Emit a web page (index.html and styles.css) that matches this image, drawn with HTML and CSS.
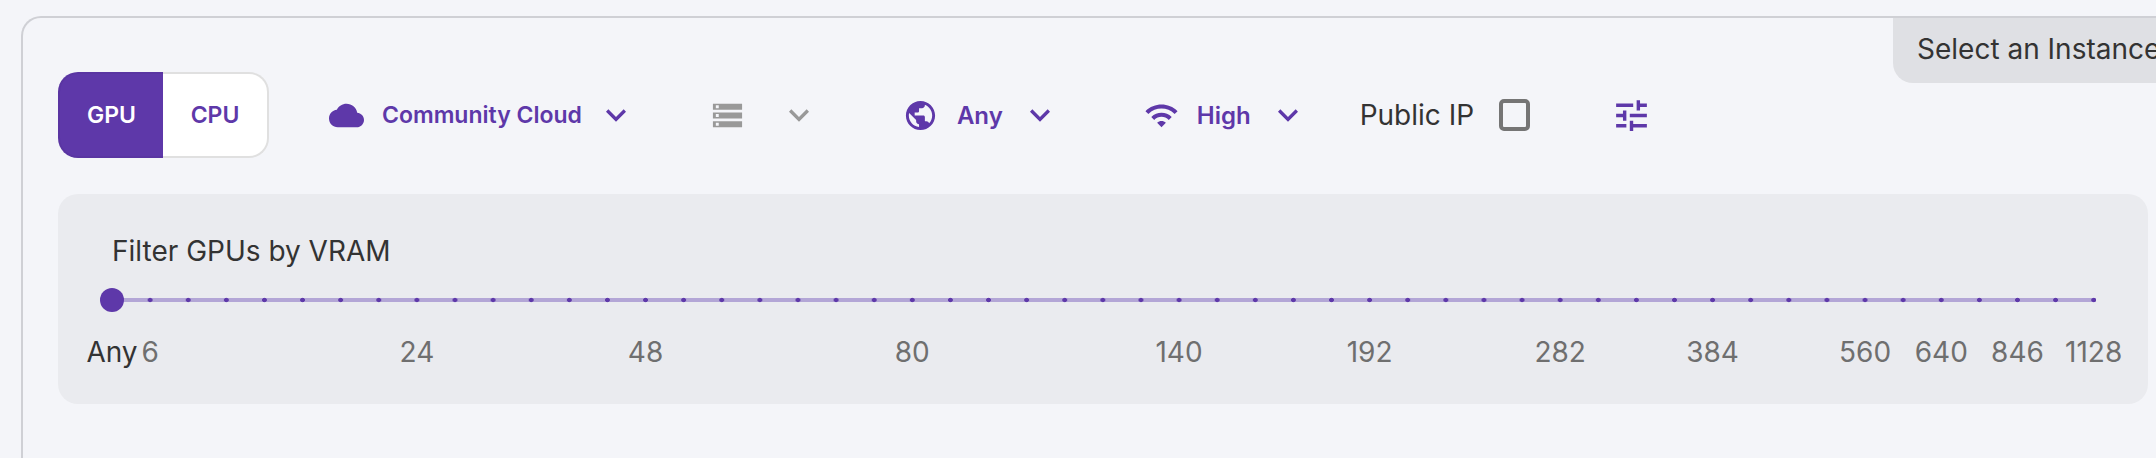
FILE: index.html
```html
<!DOCTYPE html>
<html>
<head>
    <title>Select an Instance</title>
    <link rel="stylesheet" href="styles.css">
</head>
<body>
    <div class="card">
        <div class="instance-tab">Select an Instance</div>

        <div class="toolbar">
            <div class="toggle">
                <button class="toggle-btn active">GPU</button>
                <button class="toggle-btn">CPU</button>
            </div>

            <div class="dropdown cloud">
                <svg class="icon" viewBox="0 0 24 24"><path d="M19.35 10.04C18.67 6.59 15.64 4 12 4 9.11 4 6.6 5.64 5.35 8.04 2.34 8.36 0 10.91 0 14c0 3.31 2.69 6 6 6h13c2.76 0 5-2.24 5-5 0-2.64-2.05-4.78-4.65-4.96z"/></svg>
                <span class="dropdown-label">Community Cloud</span>
                <svg class="chevron" viewBox="0 0 24 24"><path d="M16.59 8.59 12 13.17 7.41 8.59 6 10l6 6 6-6z"/></svg>
            </div>

            <div class="dropdown storage disabled">
                <svg class="icon" viewBox="0 0 24 24"><path d="M2 20h20v-4H2v4zm2-3h2v2H4v-2zM2 4v4h20V4H2zm4 3H4V5h2v2zm-4 7h20v-4H2v4zm2-3h2v2H4v-2z"/></svg>
                <svg class="chevron" viewBox="0 0 24 24"><path d="M16.59 8.59 12 13.17 7.41 8.59 6 10l6 6 6-6z"/></svg>
            </div>

            <div class="dropdown region">
                <svg class="icon" viewBox="0 0 24 24"><path d="M12 2C6.48 2 2 6.48 2 12s4.48 10 10 10 10-4.48 10-10S17.52 2 12 2zm-1 17.93c-3.95-.49-7-3.85-7-7.93 0-.62.08-1.21.21-1.79L9 15v1c0 1.1.9 2 2 2v1.93zm6.9-2.54c-.26-.81-1-1.39-1.9-1.39h-1v-3c0-.55-.45-1-1-1H8v-2h2c.55 0 1-.45 1-1V7h2c1.1 0 2-.9 2-2v-.41c2.93 1.19 5 4.06 5 7.41 0 2.08-.8 3.97-2.1 5.39z"/></svg>
                <span class="dropdown-label">Any</span>
                <svg class="chevron" viewBox="0 0 24 24"><path d="M16.59 8.59 12 13.17 7.41 8.59 6 10l6 6 6-6z"/></svg>
            </div>

            <div class="dropdown network">
                <svg class="icon" viewBox="0 0 24 24"><path d="M1 9l2 2c4.97-4.97 13.03-4.97 18 0l2-2C16.93 2.93 7.08 2.93 1 9zm8 8l3 3 3-3c-1.65-1.66-4.34-1.66-6 0zm-4-4l2 2c2.76-2.76 7.24-2.76 10 0l2-2C15.14 9.14 8.87 9.14 5 13z"/></svg>
                <span class="dropdown-label">High</span>
                <svg class="chevron" viewBox="0 0 24 24"><path d="M16.59 8.59 12 13.17 7.41 8.59 6 10l6 6 6-6z"/></svg>
            </div>

            <label class="public-ip">
                <span>Public IP</span>
                <span class="checkbox"></span>
            </label>

            <svg class="tune" viewBox="0 0 24 24"><path d="M3 17v2h6v-2H3zM3 5v2h10V5H3zm10 16v-2h8v-2h-8v-2h-2v6h2zM7 9v2H3v2h4v2h2V9H7zm14 4v-2H11v2h10zm-6-4h2V7h4V5h-4V3h-2v6z"/></svg>
        </div>

        <div class="vram-panel">
            <div class="vram-title">Filter GPUs by VRAM</div>
            <div class="slider">
                <span class="slider-thumb"></span>
            </div>
            <div class="slider-labels">
                <span class="mark first" style="grid-column: 1">Any</span>
                <span class="mark" style="grid-column: 2">6</span>
                <span class="mark" style="grid-column: 9">24</span>
                <span class="mark" style="grid-column: 15">48</span>
                <span class="mark" style="grid-column: 22">80</span>
                <span class="mark" style="grid-column: 29">140</span>
                <span class="mark" style="grid-column: 34">192</span>
                <span class="mark" style="grid-column: 39">282</span>
                <span class="mark" style="grid-column: 43">384</span>
                <span class="mark" style="grid-column: 47">560</span>
                <span class="mark" style="grid-column: 49">640</span>
                <span class="mark" style="grid-column: 51">846</span>
                <span class="mark" style="grid-column: 53">1128</span>
            </div>
        </div>
    </div>
</body>
</html>
```

FILE: styles.css
```css
body {
    margin: 0;
    height: 458px;
    overflow: hidden;
    background-color: #f4f5f9;
    font-family: 'Inter', sans-serif;
    color: #333;
}

/* card runs off the right and bottom of the window */
.card {
    position: relative;
    box-sizing: border-box;
    width: 2135px;
    height: 442px;
    margin: 16px 0 0 21px;
    padding: 54px 0 0 35px;
    border-top: 2px solid #cfd0d5;
    border-left: 2px solid #cfd0d5;
    border-top-left-radius: 20px;
    overflow: hidden;
}

.instance-tab {
    position: absolute;
    top: 0;
    left: 1870px;
    height: 65px;
    line-height: 62px;
    padding: 0 0 0 24px;
    background-color: #dfe0e4;
    border-bottom-left-radius: 20px;
    font-size: 28px;
    white-space: nowrap;
}

/* top row */
.toolbar {
    display: flex;
    align-items: center;
    height: 86px;
}

.toggle {
    display: flex;
    width: 211px;
    height: 86px;
}

.toggle-btn {
    box-sizing: border-box;
    width: 106px;
    padding: 0;
    background-color: #fff;
    border: 2px solid #e0e0e0;
    border-left: none;
    border-radius: 0 20px 20px 0;
    color: #5e38a9;
    font-family: 'Inter', sans-serif;
    font-size: 23px;
    font-weight: 600;
}

.toggle-btn.active {
    width: 105px;
    background-color: #5e38a9;
    border: 2px solid #5a35a2;
    border-right: none;
    border-radius: 20px 0 0 20px;
    color: #fff;
}

.dropdown {
    display: flex;
    align-items: center;
    color: #5e38a9;
    fill: #5e38a9;
}

.dropdown.disabled {
    fill: #999;
}

.icon {
    width: 35px;
    height: 35px;
}

.chevron {
    width: 40px;
    height: 40px;
}

.dropdown-label {
    margin: 0 17px 0 19px;
    font-size: 24px;
    font-weight: 600;
}

.cloud { margin-left: 60px; }
.cloud .dropdown-label { margin: 0 14px 0 18px; font-size: 23px; }
.storage { margin-left: 74px; }
.storage .chevron { margin-left: 34px; }
.region { margin-left: 84px; }
.network { margin-left: 84px; }
.network .dropdown-label { margin-left: 18px; }

.public-ip {
    display: flex;
    align-items: center;
    gap: 25px;
    margin-left: 52px;
    font-size: 28px;
}

.checkbox {
    box-sizing: border-box;
    width: 31px;
    height: 32px;
    border: 4px solid #757575;
    border-radius: 5px;
}

.tune {
    width: 41px;
    height: 41px;
    margin-left: 81px;
    fill: #5e38a9;
}

/* vram filter */
.vram-panel {
    box-sizing: border-box;
    width: 2090px;
    height: 210px;
    margin-top: 36px;
    padding-top: 41px;
    background-color: #eaebef;
    border-radius: 20px;
}

.vram-title {
    margin-left: 54px;
    font-size: 28px;
    line-height: 32px;
}

.slider {
    position: relative;
    width: 1986px;
    height: 24px;
    margin: 21px 0 0 52px;
    background:
        radial-gradient(circle, #5e38a9 2px, transparent 2.6px) -17.06px 0 / 38.115px 24px repeat-x,
        linear-gradient(#b3a6d6, #b3a6d6) center / 100% 4px no-repeat;
}

.slider-thumb {
    position: absolute;
    top: 0;
    left: -10px;
    width: 24px;
    height: 24px;
    background-color: #5e38a9;
    border-radius: 50%;
}

.slider-labels {
    display: grid;
    grid-template-columns: repeat(53, 38.115px);
    margin: 24px 0 0 34.94px;
}

.mark {
    grid-row: 1;
    justify-self: center;
    font-size: 28px;
    line-height: 32px;
    color: #6f6f6f;
    white-space: nowrap;
}

.mark.first {
    color: #333;
}
```
